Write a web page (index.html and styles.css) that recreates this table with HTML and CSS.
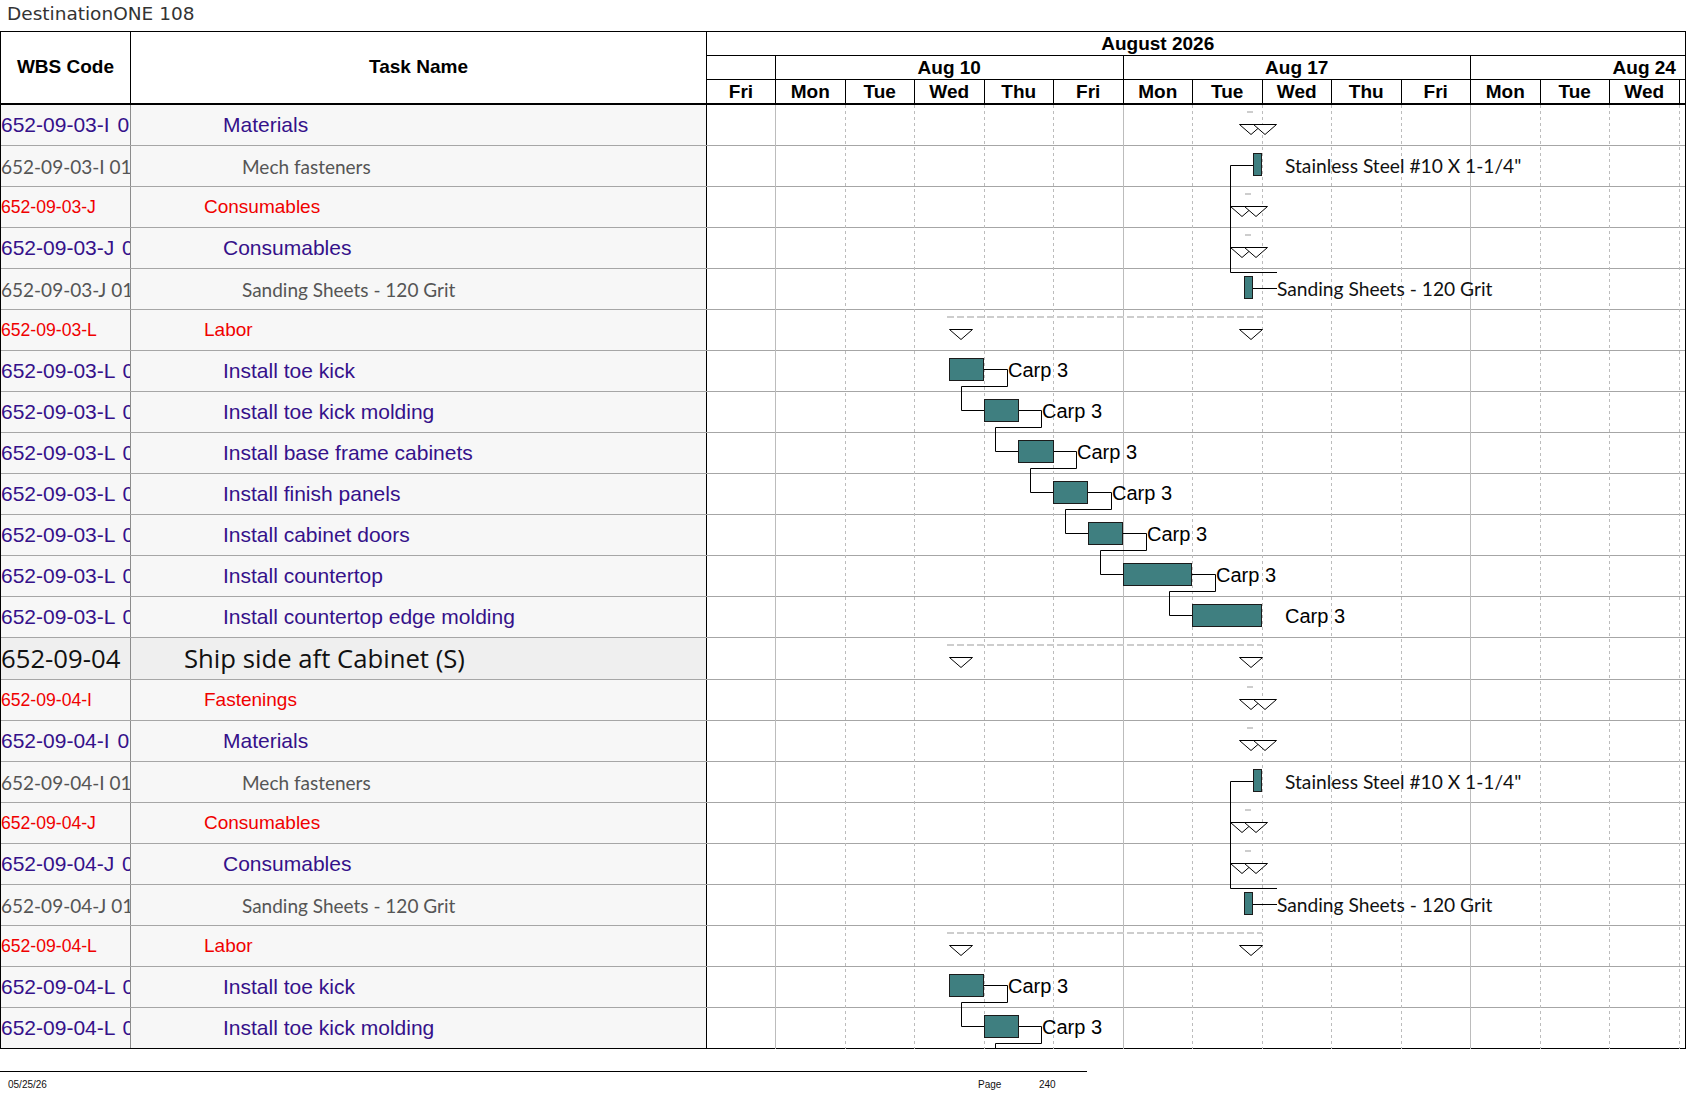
FILE: index.html
```html
<!DOCTYPE html>
<html>
<head>
<meta charset="utf-8">
<title>DestinationONE 108</title>
<link rel="stylesheet" href="styles.css">
</head>
<body>
<div class="page">
  <div class="doc-title">DestinationONE 108</div>
  <div class="sheet">
    <div class="head">
      <div class="hcell">WBS Code</div>
      <div class="hcell">Task Name</div>
      <div class="timescale">
        <div class="tier month"><span class="month-label">August 2026</span></div>
        <div class="tier weeks">
          <div class="wk"></div>
          <div class="wk">Aug 10</div>
          <div class="wk">Aug 17</div>
          <div class="wk">Aug 24</div>
        </div>
        <div class="tier days">
          <div class="dy">Fri</div>
          <div class="dy">Mon</div><div class="dy">Tue</div><div class="dy">Wed</div><div class="dy">Thu</div><div class="dy">Fri</div>
          <div class="dy">Mon</div><div class="dy">Tue</div><div class="dy">Wed</div><div class="dy">Thu</div><div class="dy">Fri</div>
          <div class="dy">Mon</div><div class="dy">Tue</div><div class="dy">Wed</div>
          <div class="dy end"></div>
        </div>
      </div>
    </div>
    <div class="body">
      <div class="row purple"><div class="wbs">652-09-03-I 0</div><div class="task l2">Materials</div><div class="lane"></div></div>
      <div class="row grey"><div class="wbs">652-09-03-I 01-</div><div class="task l3">Mech fasteners</div><div class="lane"></div></div>
      <div class="row red"><div class="wbs">652-09-03-J</div><div class="task l1">Consumables</div><div class="lane"></div></div>
      <div class="row purple"><div class="wbs">652-09-03-J 0</div><div class="task l2">Consumables</div><div class="lane"></div></div>
      <div class="row grey"><div class="wbs">652-09-03-J 01</div><div class="task l3">Sanding Sheets - 120 Grit</div><div class="lane"></div></div>
      <div class="row red"><div class="wbs">652-09-03-L</div><div class="task l1">Labor</div><div class="lane"></div></div>
      <div class="row purple"><div class="wbs">652-09-03-L 0</div><div class="task l2">Install toe kick</div><div class="lane"></div></div>
      <div class="row purple"><div class="wbs">652-09-03-L 0</div><div class="task l2">Install toe kick molding</div><div class="lane"></div></div>
      <div class="row purple"><div class="wbs">652-09-03-L 0</div><div class="task l2">Install base frame cabinets</div><div class="lane"></div></div>
      <div class="row purple"><div class="wbs">652-09-03-L 0</div><div class="task l2">Install finish panels</div><div class="lane"></div></div>
      <div class="row purple"><div class="wbs">652-09-03-L 0</div><div class="task l2">Install cabinet doors</div><div class="lane"></div></div>
      <div class="row purple"><div class="wbs">652-09-03-L 0</div><div class="task l2">Install countertop</div><div class="lane"></div></div>
      <div class="row purple"><div class="wbs">652-09-03-L 0</div><div class="task l2">Install countertop edge molding</div><div class="lane"></div></div>
      <div class="row big"><div class="wbs">652-09-04</div><div class="task l0">Ship side aft Cabinet (S)</div><div class="lane"></div></div>
      <div class="row red"><div class="wbs">652-09-04-I</div><div class="task l1">Fastenings</div><div class="lane"></div></div>
      <div class="row purple"><div class="wbs">652-09-04-I 0</div><div class="task l2">Materials</div><div class="lane"></div></div>
      <div class="row grey"><div class="wbs">652-09-04-I 01-</div><div class="task l3">Mech fasteners</div><div class="lane"></div></div>
      <div class="row red"><div class="wbs">652-09-04-J</div><div class="task l1">Consumables</div><div class="lane"></div></div>
      <div class="row purple"><div class="wbs">652-09-04-J 0</div><div class="task l2">Consumables</div><div class="lane"></div></div>
      <div class="row grey"><div class="wbs">652-09-04-J 01</div><div class="task l3">Sanding Sheets - 120 Grit</div><div class="lane"></div></div>
      <div class="row red"><div class="wbs">652-09-04-L</div><div class="task l1">Labor</div><div class="lane"></div></div>
      <div class="row purple"><div class="wbs">652-09-04-L 0</div><div class="task l2">Install toe kick</div><div class="lane"></div></div>
      <div class="row purple last"><div class="wbs">652-09-04-L 0</div><div class="task l2">Install toe kick molding</div><div class="lane"></div></div>

      <svg class="chart" viewBox="707 105 978 944" width="978" height="944" xmlns="http://www.w3.org/2000/svg">
        <g class="grid-week">
          <line x1="775.5" y1="105" x2="775.5" y2="1049"/>
          <line x1="1123.5" y1="105" x2="1123.5" y2="1049"/>
          <line x1="1470.5" y1="105" x2="1470.5" y2="1049"/>
        </g>
        <g class="grid-day">
          <line x1="845.5" y1="105" x2="845.5" y2="1049"/>
          <line x1="914.5" y1="105" x2="914.5" y2="1049"/>
          <line x1="984.5" y1="105" x2="984.5" y2="1049"/>
          <line x1="1053.5" y1="105" x2="1053.5" y2="1049"/>
          <line x1="1192.5" y1="105" x2="1192.5" y2="1049"/>
          <line x1="1262.5" y1="105" x2="1262.5" y2="1049"/>
          <line x1="1331.5" y1="105" x2="1331.5" y2="1049"/>
          <line x1="1401.5" y1="105" x2="1401.5" y2="1049"/>
          <line x1="1540.5" y1="105" x2="1540.5" y2="1049"/>
          <line x1="1609.5" y1="105" x2="1609.5" y2="1049"/>
          <line x1="1679.5" y1="105" x2="1679.5" y2="1049"/>
        </g>

        <g class="sum-line">
          <line x1="1247" y1="112" x2="1253" y2="112"/>
          <line x1="1245" y1="194" x2="1251" y2="194"/>
          <line x1="1245" y1="235" x2="1251" y2="235"/>
          <line class="long" x1="947" y1="317" x2="1262" y2="317"/>
          <line class="long" x1="947" y1="645" x2="1262" y2="645"/>
          <line x1="1247" y1="687" x2="1253" y2="687"/>
          <line x1="1247" y1="728" x2="1253" y2="728"/>
          <line x1="1245" y1="810" x2="1251" y2="810"/>
          <line x1="1245" y1="851" x2="1251" y2="851"/>
          <line class="long" x1="947" y1="933" x2="1262" y2="933"/>
        </g>

        <g class="tri">
          <polygon points="1239.5,124.5 1262.5,124.5 1251,134.5"/>
          <polygon points="1253.5,124.5 1276.5,124.5 1265,134.5"/>
          <polygon points="1230.5,206.5 1253.5,206.5 1242,216.5"/>
          <polygon points="1244.5,206.5 1267.5,206.5 1256,216.5"/>
          <polygon points="1230.5,247.5 1253.5,247.5 1242,257.5"/>
          <polygon points="1244.5,247.5 1267.5,247.5 1256,257.5"/>
          <polygon points="949.5,329.5 972.5,329.5 961,339.5"/>
          <polygon points="1239.5,329.5 1262.5,329.5 1251,339.5"/>
          <polygon points="949.5,657.5 972.5,657.5 961,667.5"/>
          <polygon points="1239.5,657.5 1262.5,657.5 1251,667.5"/>
          <polygon points="1239.5,699.5 1262.5,699.5 1251,709.5"/>
          <polygon points="1253.5,699.5 1276.5,699.5 1265,709.5"/>
          <polygon points="1239.5,740.5 1262.5,740.5 1251,750.5"/>
          <polygon points="1253.5,740.5 1276.5,740.5 1265,750.5"/>
          <polygon points="1230.5,822.5 1253.5,822.5 1242,832.5"/>
          <polygon points="1244.5,822.5 1267.5,822.5 1256,832.5"/>
          <polygon points="1230.5,863.5 1253.5,863.5 1242,873.5"/>
          <polygon points="1244.5,863.5 1267.5,863.5 1256,873.5"/>
          <polygon points="949.5,945.5 972.5,945.5 961,955.5"/>
          <polygon points="1239.5,945.5 1262.5,945.5 1251,955.5"/>
        </g>

        <g class="link">
          <path d="M1253 165.5 H1230.5 V272.5 H1277"/>
          <path d="M1253 288.5 H1277"/>
          <path d="M983.5 369.5 H1007.5 V386.5 H961.5 V410.5 H984"/>
          <path d="M1018.5 410.5 H1041.5 V427.5 H995.5 V451.5 H1018.5"/>
          <path d="M1053.5 451.5 H1076.5 V468.5 H1030.5 V492.5 H1053.5"/>
          <path d="M1087.5 492.5 H1111.5 V509.5 H1065.5 V533.5 H1088"/>
          <path d="M1122.5 533.5 H1146.5 V550.5 H1100.5 V574.5 H1123"/>
          <path d="M1191.5 574.5 H1215.5 V591.5 H1169.5 V615.5 H1192"/>
          <path d="M1253 781.5 H1230.5 V888.5 H1277"/>
          <path d="M1253 904.5 H1277"/>
          <path d="M983.5 985.5 H1007.5 V1002.5 H961.5 V1026.5 H984"/>
          <path d="M1018.5 1026.5 H1041.5 V1043.5 H995.5 V1050"/>
        </g>

        <g class="bar">
          <rect x="1253.5" y="153.5" width="8" height="22"/>
          <rect x="1244.5" y="276.5" width="8" height="22"/>
          <rect x="949.5" y="358.5" width="34" height="22"/>
          <rect x="984.5" y="399.5" width="34" height="22"/>
          <rect x="1018.5" y="440.5" width="35" height="22"/>
          <rect x="1053.5" y="481.5" width="34" height="22"/>
          <rect x="1088.5" y="522.5" width="34" height="22"/>
          <rect x="1123.5" y="563.5" width="68" height="22"/>
          <rect x="1192.5" y="604.5" width="69" height="22"/>
          <rect x="1253.5" y="769.5" width="8" height="22"/>
          <rect x="1244.5" y="892.5" width="8" height="22"/>
          <rect x="949.5" y="974.5" width="34" height="22"/>
          <rect x="984.5" y="1015.5" width="34" height="22"/>
        </g>

        <g class="res">
          <text x="1008" y="377">Carp 3</text>
          <text x="1042" y="418">Carp 3</text>
          <text x="1077" y="459">Carp 3</text>
          <text x="1112" y="500">Carp 3</text>
          <text x="1147" y="541">Carp 3</text>
          <text x="1216" y="582">Carp 3</text>
          <text x="1285" y="623">Carp 3</text>
          <text x="1008" y="993">Carp 3</text>
          <text x="1042" y="1034">Carp 3</text>
        </g>
        <g class="mat">
          <text x="1285" y="173">Stainless Steel #10 X 1-1/4"</text>
          <text x="1277" y="296">Sanding Sheets - 120 Grit</text>
          <text x="1285" y="789">Stainless Steel #10 X 1-1/4"</text>
          <text x="1277" y="912">Sanding Sheets - 120 Grit</text>
        </g>
      </svg>
    </div>
  </div>
  <div class="footer">
    <div class="f-date">05/25/26</div>
    <div class="f-page">Page</div>
    <div class="f-num">240</div>
  </div>
</div>
</body>
</html>
```

FILE: styles.css
```css
* {
  box-sizing: border-box;
}

body {
  margin: 0;
  background: #ffffff;
  font-family: "Liberation Sans", Arial, sans-serif;
  color: #000;
}

.page {
  width: 1687px;
}

.doc-title {
  height: 31px;
  padding-left: 7px;
  font-family: "DejaVu Sans", sans-serif;
  font-weight: normal;
  font-size: 18.5px;
  line-height: 28px;
  color: #333;
}

.sheet {
  width: 1686px;
  border: 1px solid #000;
  border-bottom: none;
}

/* ---------- header ---------- */
.head {
  display: grid;
  grid-template-columns: 130px 576px 978px;
  height: 73px;
  border-bottom: 2px solid #000;
}

.hcell {
  display: flex;
  align-items: center;
  justify-content: center;
  border-right: 1px solid #000;
  font-weight: bold;
  font-size: 19px;
  padding-bottom: 2px;
}

.timescale {
  display: flex;
  flex-direction: column;
  overflow: hidden;
  font-weight: bold;
  font-size: 19px;
}

.tier {
  overflow: hidden;
}

.tier.month {
  height: 24px;
  border-bottom: 1px solid #000;
}

.month-label {
  display: block;
  width: 1459.5px;
  margin-left: -279px;
  text-align: center;
  line-height: 23px;
}

.tier.weeks {
  height: 24px;
  border-bottom: 1px solid #000;
  display: grid;
  grid-template-columns: 69px 347.5px 347.5px 347.5px;
}

.wk {
  border-right: 1px solid #000;
  text-align: center;
  line-height: 23px;
}

.tier.days {
  height: 23px;
  display: grid;
  grid-template-columns: 69px repeat(13, 69.5px) 1fr;
}

.dy {
  border-right: 1px solid #000;
  text-align: center;
  line-height: 23px;
}

.dy.end {
  border-right: none;
}

/* ---------- body ---------- */
.body {
  position: relative;
}

.row {
  display: grid;
  grid-template-columns: 130px 576px 978px;
  height: 41px;
  border-bottom: 1px solid #a6a6a6;
}

.row.big {
  height: 42px;
}

.row.last {
  border-bottom-color: #000;
}

.wbs {
  display: flex;
  align-items: center;
  padding-left: 0;
  border-right: 1px solid #8c8c8c;
  background: #f7f7f7;
  white-space: nowrap;
  overflow: hidden;
}

.task {
  display: flex;
  align-items: center;
  border-right: 1px solid #000;
  background: #f7f7f7;
  white-space: nowrap;
  overflow: hidden;
}

.lane {
  background: #fff;
}

.task.l0 { padding-left: 53px; }
.task.l1 { padding-left: 73px; }
.task.l2 { padding-left: 92px; }
.task.l3 { padding-left: 111px; }

.row.purple {
  color: #35118a;
  font-size: 21px;
}

.row.purple .wbs {
  word-spacing: 2px;
}

.row.red {
  color: #f00000;
  font-size: 19px;
}

.row.red .wbs {
  font-size: 17.6px;
}

.row.grey {
  color: #555555;
  font-family: "Lato", "Open Sans", sans-serif;
  font-size: 19px;
}

.row.big {
  color: #111;
  font-family: "Open Sans", sans-serif;
  font-size: 25.7px;
}

.row.big .wbs,
.row.big .task {
  background: #efefef;
}

/* ---------- chart ---------- */
.chart {
  position: absolute;
  left: 706px;
  top: 0;
  width: 978px;
  height: 944px;
}

.grid-week line {
  stroke: #bcbcbc;
  stroke-width: 1;
}

.grid-day line {
  stroke: #bcbcbc;
  stroke-width: 1;
  stroke-dasharray: 3 3;
}

.sum-line line {
  stroke: #cdcdcd;
  stroke-width: 2;
}

.sum-line line.long {
  stroke-dasharray: 7 3;
}

.tri polygon {
  fill: #fff;
  stroke: #000;
  stroke-width: 1;
}

.link path {
  fill: none;
  stroke: #000;
  stroke-width: 1;
}

.bar rect {
  fill: #3f7f80;
  stroke: #1b1b1b;
  stroke-width: 1;
}

.res text {
  font-family: "Liberation Sans", Arial, sans-serif;
  font-size: 20px;
  fill: #000;
}

.mat text {
  font-family: "Lato", "Open Sans", sans-serif;
  font-size: 19.2px;
  fill: #111;
}

/* ---------- footer ---------- */
.footer {
  width: 1087px;
  margin-top: 22px;
  border-top: 1px solid #000;
  display: grid;
  grid-template-columns: 978px 61px auto;
  padding-top: 7px;
  font-family: "Liberation Sans Narrow", "Liberation Sans", sans-serif;
  font-size: 10px;
  color: #111;
}

.f-date {
  padding-left: 8px;
}
```
